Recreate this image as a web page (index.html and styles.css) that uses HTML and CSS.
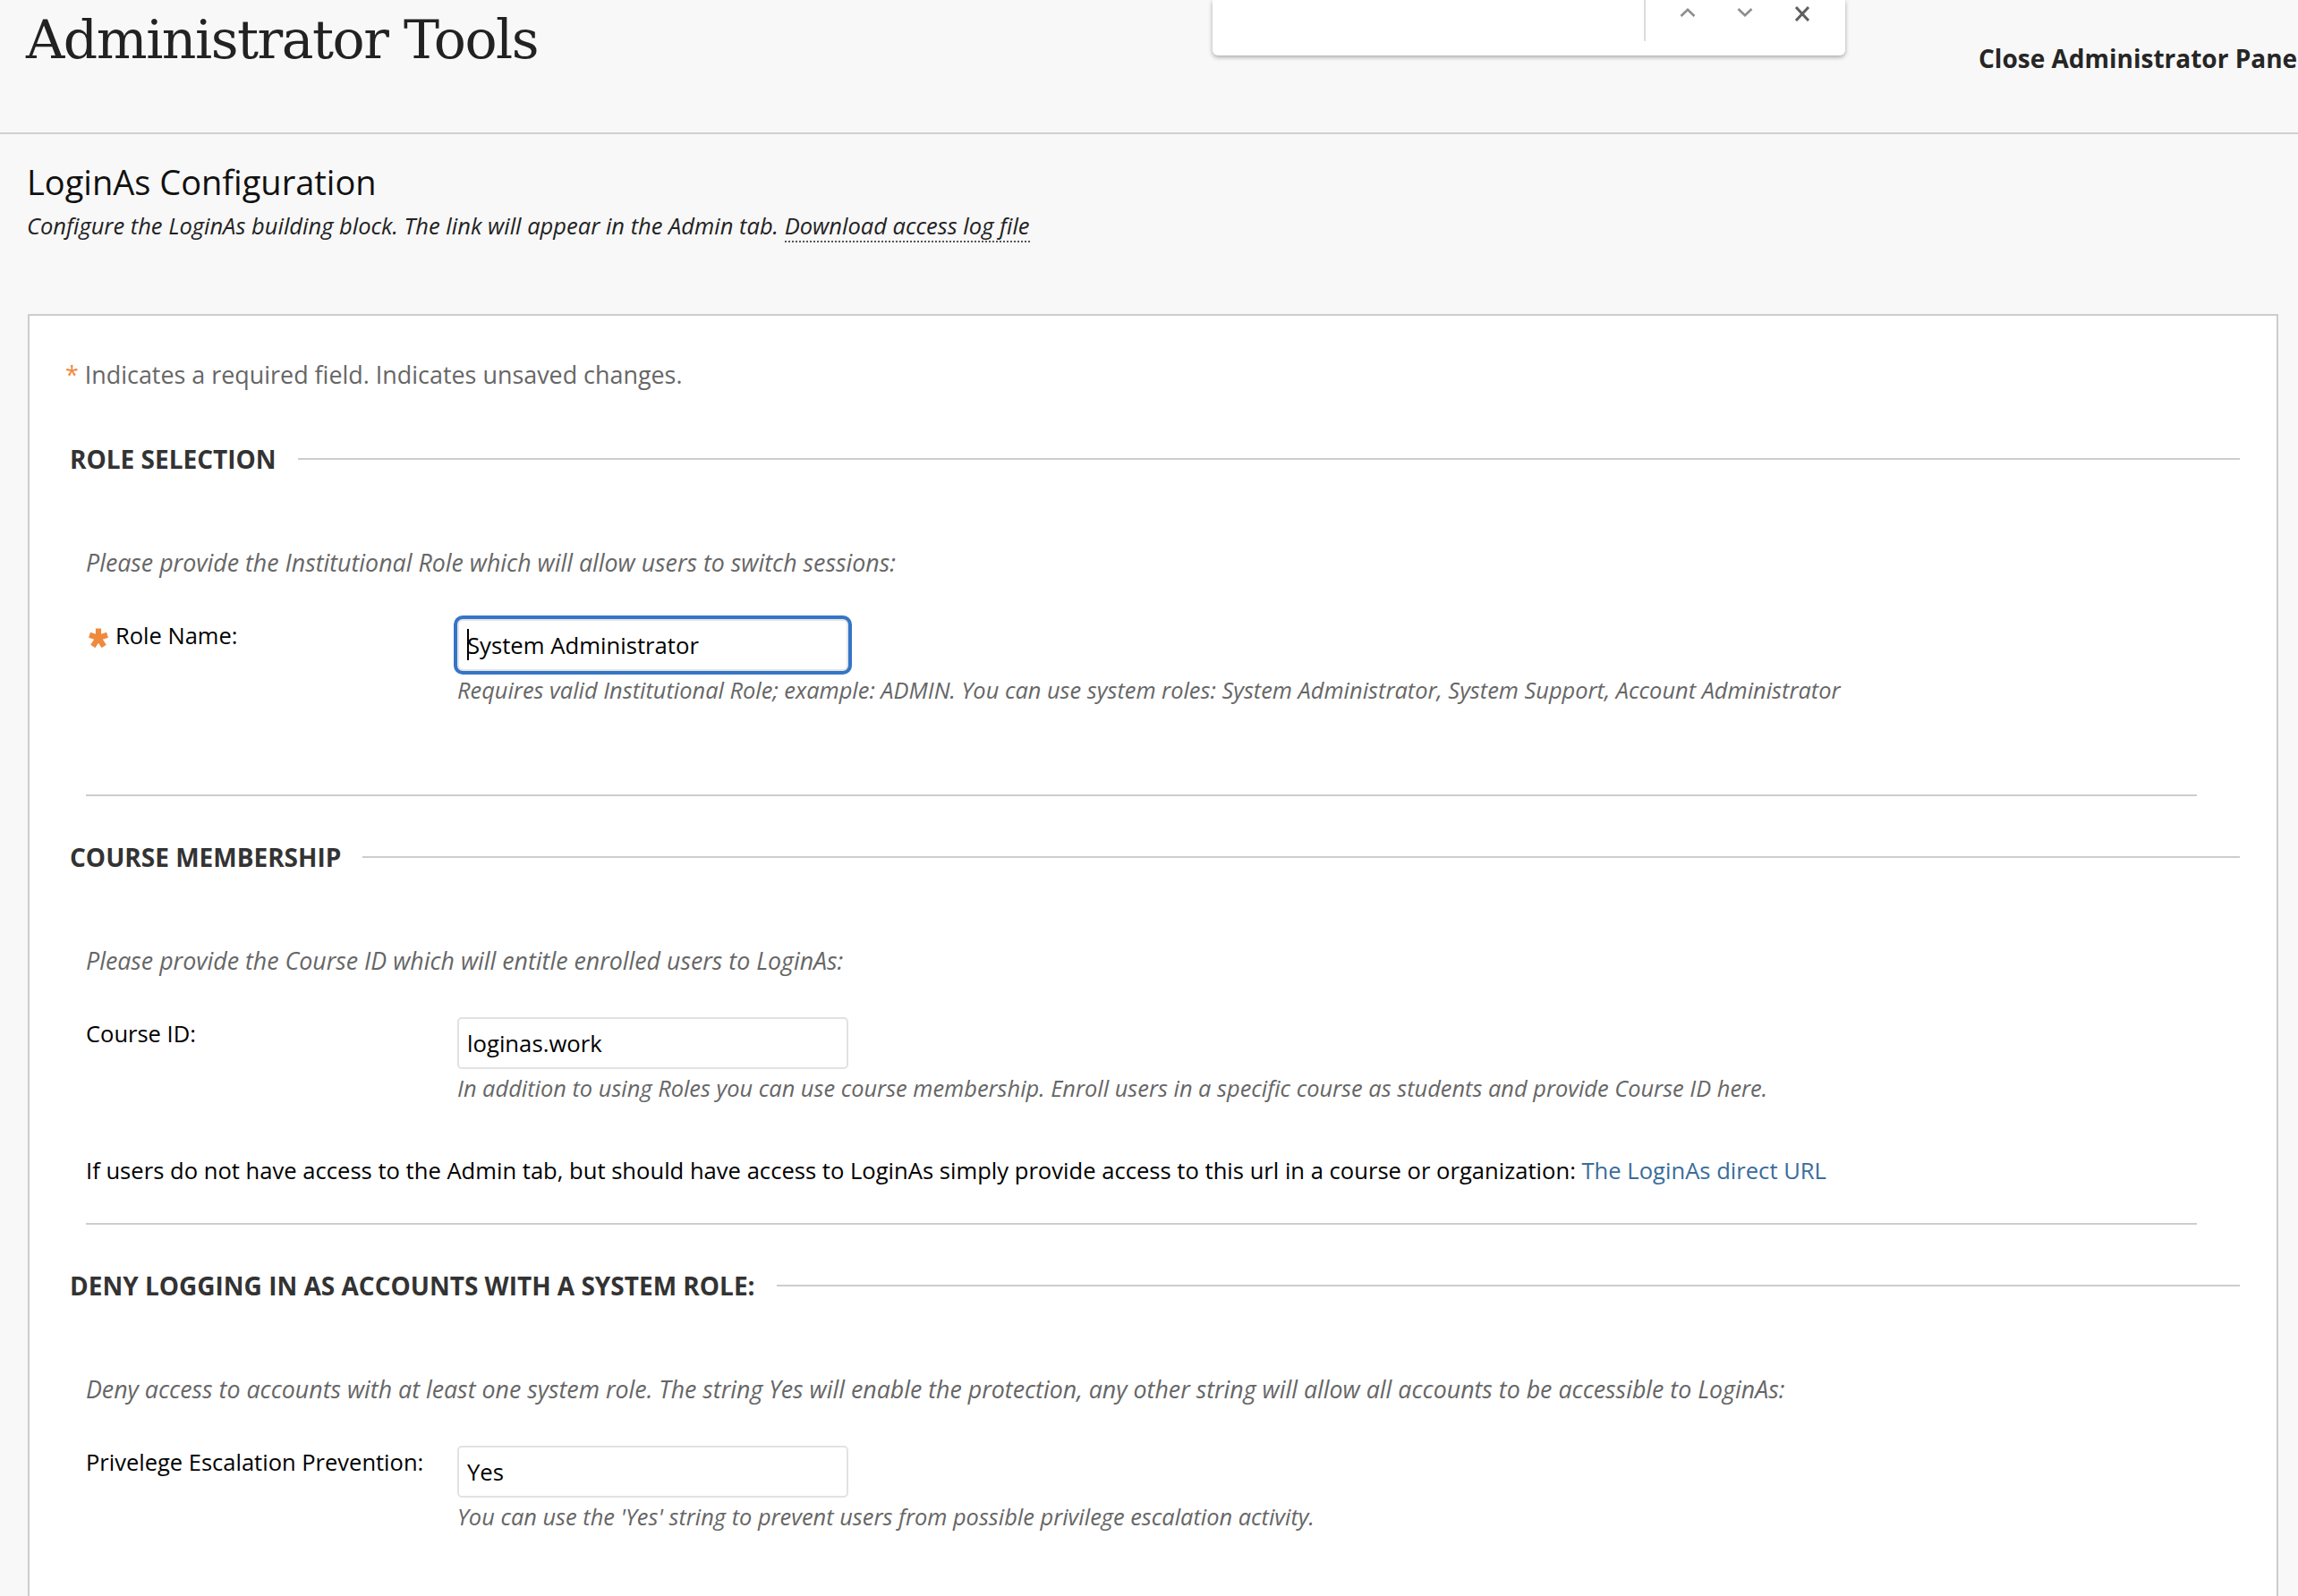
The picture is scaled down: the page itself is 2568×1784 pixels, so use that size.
FILE: index.html
```html
<!DOCTYPE html>
<html lang="en">
<head>
<meta charset="utf-8">
<title>Administrator Tools</title>
<link rel="stylesheet" href="styles.css">
</head>
<body>
<header class="topbar">
  <h1 class="page-title">Administrator Tools</h1>
  <div class="close-wrap"><a class="close-link" href="#">Close Administrator Panel</a></div>
</header>

<div class="findbar">
  <div class="find-input"></div>
  <div class="find-btns">
    <svg class="find-ico" width="18" height="10" viewBox="0 0 18 10"><polyline points="1.5,9 9,1.8 16.5,9" fill="none" stroke="#8e8e8e" stroke-width="2.6"/></svg>
    <svg class="find-ico" width="18" height="10" viewBox="0 0 18 10"><polyline points="1.5,1 9,8.2 16.5,1" fill="none" stroke="#8e8e8e" stroke-width="2.6"/></svg>
    <svg class="find-ico find-x" width="18" height="17" viewBox="0 0 18 17"><path d="M2 1 L16 16 M16 1 L2 16" fill="none" stroke="#5f5f5f" stroke-width="3"/></svg>
  </div>
</div>

<main class="content">
  <div class="intro">
    <h2 class="intro-title">LoginAs Configuration</h2>
    <p class="intro-sub">Configure the LoginAs building block. The link will appear in the Admin tab. <a class="dotted" href="#">Download access log file</a></p>
  </div>

  <div class="panel">
    <p class="req-note"><span class="req-star">*</span> Indicates a required field. Indicates unsaved changes.</p>

    <section class="step">
      <div class="step-head"><h3 class="step-title">ROLE SELECTION</h3><span class="rule"></span></div>
      <div class="step-body">
        <p class="instr">Please provide the Institutional Role which will allow users to switch sessions:</p>
        <div class="field-row">
          <label class="field-label" for="role"><svg class="big-star" width="24" height="22" viewBox="-12 -11 24 22"><g stroke="#f0893c" stroke-width="6.2"><line x1="0" y1="0" x2="0" y2="-10.5"/><line x1="0" y1="0" x2="10" y2="-3.2"/><line x1="0" y1="0" x2="6.2" y2="9.5"/><line x1="0" y1="0" x2="-6.2" y2="9.5"/><line x1="0" y1="0" x2="-10" y2="-3.2"/></g></svg>Role Name:</label>
          <div class="field-ctrl">
            <div class="input-wrap">
              <input id="role" class="text-input is-focused" type="text" value="System Administrator">
              <span class="caret"></span>
            </div>
            <p class="help">Requires valid Institutional Role; example: ADMIN. You can use system roles: System Administrator, System Support, Account Administrator</p>
          </div>
        </div>
        <hr class="sep sep-role">
      </div>
    </section>

    <section class="step">
      <div class="step-head"><h3 class="step-title">COURSE MEMBERSHIP</h3><span class="rule"></span></div>
      <div class="step-body">
        <p class="instr">Please provide the Course ID which will entitle enrolled users to LoginAs:</p>
        <div class="field-row">
          <label class="field-label" for="course">Course ID:</label>
          <div class="field-ctrl">
            <input id="course" class="text-input" type="text" value="loginas.work">
            <p class="help">In addition to using Roles you can use course membership. Enroll users in a specific course as students and provide Course ID here.</p>
          </div>
        </div>
        <p class="url-note">If users do not have access to the Admin tab, but should have access to LoginAs simply provide access to this url in a course or organization: <a class="blue-link" href="#">The LoginAs direct URL</a></p>
        <hr class="sep sep-course">
      </div>
    </section>

    <section class="step">
      <div class="step-head"><h3 class="step-title">DENY LOGGING IN AS ACCOUNTS WITH A SYSTEM ROLE:</h3><span class="rule"></span></div>
      <div class="step-body">
        <p class="instr">Deny access to accounts with at least one system role. The string Yes will enable the protection, any other string will allow all accounts to be accessible to LoginAs:</p>
        <div class="field-row">
          <label class="field-label" for="deny">Privelege Escalation Prevention:</label>
          <div class="field-ctrl">
            <input id="deny" class="text-input" type="text" value="Yes">
            <p class="help">You can use the 'Yes' string to prevent users from possible privilege escalation activity.</p>
          </div>
        </div>
        <hr class="sep sep-role">
      </div>
    </section>
  </div>
</main>
</body>
</html>
```

FILE: styles.css
```css
* { box-sizing: border-box; }

html, body { margin: 0; padding: 0; }

body {
  position: relative;
  width: 2568px;
  height: 1784px;
  overflow: hidden;
  background: #f8f8f8;
  font-family: "Open Sans", "Liberation Sans", sans-serif;
  color: #000;
}

/* ---------- top bar ---------- */
.topbar {
  display: flex;
  height: 150px;
  border-bottom: 2px solid #d0d0d0;
}

.page-title {
  flex: 1;
  margin: 0;
  padding: 4px 0 0 29px;
  font-family: "DejaVu Serif", "Liberation Serif", serif;
  font-weight: 400;
  font-size: 60px;
  line-height: 80px;
  letter-spacing: -1.5px;
  color: #222;
  white-space: nowrap;
}

.close-wrap {
  flex: 0 0 357px;
  overflow: hidden;
  padding-top: 46px;
}

.close-link {
  font-weight: 700;
  font-size: 28px;
  line-height: 38px;
  color: #262626;
  text-decoration: none;
  white-space: nowrap;
}

/* ---------- browser find bar (overlay) ---------- */
.findbar {
  position: absolute;
  top: 0;
  left: 1355px;
  width: 707px;
  height: 62px;
  display: flex;
  background: #fff;
  border-radius: 0 0 6px 6px;
  box-shadow: 0 2px 5px rgba(0, 0, 0, 0.33);
}

.find-input {
  width: 484px;
  height: 46px;
  border-right: 2px solid #dadce0;
}

.find-btns {
  display: flex;
  align-items: flex-start;
  gap: 46px;
  padding: 8px 0 0 38px;
}

.find-ico { display: block; margin-top: 1px; }
.find-x { margin-top: -1px; }

/* ---------- content ---------- */
.content {
  padding: 0 22px 0 31px;
}

.intro {
  margin-left: -1px;
  padding-top: 26px;
}

.intro-title {
  margin: 0;
  font-weight: 400;
  font-size: 38px;
  line-height: 54px;
  color: #111;
}

.intro-sub {
  margin: 4px 0 0;
  font-style: italic;
  font-size: 25.5px;
  line-height: 36px;
  color: #222;
}

.dotted {
  color: inherit;
  text-decoration: none;
  border-bottom: 2px dotted #555;
}

.panel {
  margin-top: 81px;
  padding: 48px 41px 300px 40px;
  background: #fff;
  border: 2px solid #cdcdcd;
  border-bottom: none;
}

.req-note {
  margin: 0;
  font-size: 26.9px;
  line-height: 36px;
  color: #666;
}

.req-star { color: #f0893c; }

.step {
  margin-top: 57px;
  padding-left: 5px;
}

.step + .step { margin-top: 49px; }

.step-head {
  display: flex;
  align-items: center;
  gap: 24px;
}

.step-title {
  margin: 0;
  font-size: 28px;
  line-height: 38px;
  font-weight: 700;
  color: #333;
  white-space: nowrap;
}

.rule {
  flex: 1;
  height: 2px;
  background: #cdcdcd;
}

.step-body {
  padding: 0 48px 0 18px;
}

.instr {
  margin: 79px 0 0;
  font-style: italic;
  font-size: 26.75px;
  line-height: 36px;
  color: #666;
}

.field-row {
  display: grid;
  grid-template-columns: 415px 1fr;
  margin-top: 45px;
}

.field-label {
  display: flex;
  align-items: flex-start;
  font-size: 25.5px;
  line-height: 36px;
  color: #000;
}

.big-star {
  flex-shrink: 0;
  margin: 10px 7px 0 2px;
}

.input-wrap {
  position: relative;
  width: 437px;
}

.text-input {
  display: block;
  width: 437px;
  height: 58px;
  margin: 0;
  padding: 0 9px;
  border: 2px solid #e2e2e2;
  border-radius: 5px;
  background: #fff;
  font-family: "Open Sans", "Liberation Sans", sans-serif;
  font-size: 25.7px;
  color: #000;
  outline: none;
}

.text-input.is-focused {
  border-color: #e4e4e4;
  box-shadow: 0 0 0 4px #3575c6;
  border-radius: 6px;
}

.caret {
  position: absolute;
  left: 11px;
  top: 11px;
  width: 2px;
  height: 35px;
  background: #000;
}

.help {
  margin: 3px 0 0;
  font-style: italic;
  font-size: 25.4px;
  line-height: 36px;
  color: #666;
}

.url-note {
  margin: 57px 0 0;
  font-size: 25.6px;
  line-height: 36px;
  color: #000;
}

.blue-link {
  color: #3a6c9c;
  text-decoration: none;
}

.sep {
  display: block;
  height: 2px;
  border: 0;
  background: #cdcdcd;
  margin: 0;
}

.sep-role { margin-top: 99px; }
.sep-course { margin-top: 40px; }
```
